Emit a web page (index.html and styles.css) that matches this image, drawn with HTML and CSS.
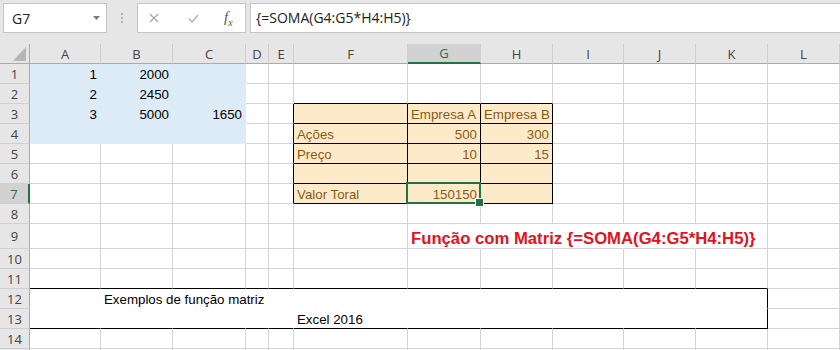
FILE: index.html
```html
<!DOCTYPE html>
<html lang="pt">
<head>
    <meta charset="UTF-8">
    <title>Exemplos de função matriz</title>
    <link rel="stylesheet" href="styles.css">
</head>
<body>

<div class="formula-bar">
    <div class="name-box">
        <span>G7</span>
        <svg class="caret" width="7" height="4" viewBox="0 0 7 4"><path d="M0 0h7L3.5 4z" fill="#7a7a7a"/></svg>
    </div>
    <div class="grip"><i></i><i></i><i></i></div>
    <div class="fx-box">
        <svg class="cancel" width="10" height="10" viewBox="0 0 10 10"><path d="M1 1l8 8M9 1l-8 8" stroke="#a6a6a6" stroke-width="1.2" fill="none"/></svg>
        <svg class="enter" width="11" height="9" viewBox="0 0 11 9"><path d="M1 4.5l3 3.5L10 1" stroke="#b0b0b0" stroke-width="1.3" fill="none"/></svg>
        <span class="fx"><i>f</i><sub>x</sub></span>
    </div>
    <div class="formula">{=SOMA(G4:G5*H4:H5)}</div>
</div>

<div class="sheet">
    <div class="row head">
        <div class="corner"><svg width="13" height="14" viewBox="0 0 13 14"><path d="M13 0v14H0z" fill="#b5b5b5"/></svg></div>
        <div>A</div><div>B</div><div>C</div><div>D</div><div>E</div><div>F</div><div class="on">G</div><div>H</div><div>I</div><div>J</div><div>K</div><div>L</div>
    </div>
    <div class="row">
        <div class="rh">1</div>
        <div class="b num">1</div><div class="b num">2000</div><div class="b"></div><div></div><div></div><div></div><div></div><div></div><div></div><div></div><div></div><div></div>
    </div>
    <div class="row">
        <div class="rh">2</div>
        <div class="b num">2</div><div class="b num">2450</div><div class="b"></div><div></div><div></div><div class="tt"></div><div class="tt"></div><div class="tt"></div><div></div><div></div><div></div><div></div>
    </div>
    <div class="row">
        <div class="rh">3</div>
        <div class="b num">3</div><div class="b num">5000</div><div class="b num">1650</div><div></div><div class="tl"></div><div class="t"></div><div class="t">Empresa A</div><div class="t">Empresa B</div><div></div><div></div><div></div><div></div>
    </div>
    <div class="row">
        <div class="rh">4</div>
        <div class="b"></div><div class="b"></div><div class="b"></div><div></div><div class="tl"></div><div class="t">Ações</div><div class="t num">500</div><div class="t num">300</div><div></div><div></div><div></div><div></div>
    </div>
    <div class="row">
        <div class="rh">5</div>
        <div></div><div></div><div></div><div></div><div class="tl"></div><div class="t">Preço</div><div class="t num">10</div><div class="t num">15</div><div></div><div></div><div></div><div></div>
    </div>
    <div class="row">
        <div class="rh">6</div>
        <div></div><div></div><div></div><div></div><div class="tl"></div><div class="t"></div><div class="t"></div><div class="t"></div><div></div><div></div><div></div><div></div>
    </div>
    <div class="row">
        <div class="rh on">7</div>
        <div></div><div></div><div></div><div></div><div class="tl"></div><div class="t">Valor Toral</div><div class="t num sel">150150</div><div class="t"></div><div></div><div></div><div></div><div></div>
    </div>
    <div class="row">
        <div class="rh">8</div>
        <div></div><div></div><div></div><div></div><div></div><div></div><div></div><div></div><div></div><div></div><div></div><div></div>
    </div>
    <div class="row tall">
        <div class="rh">9</div>
        <div></div><div></div><div></div><div></div><div></div><div></div><div class="nr red">Função com Matriz {=SOMA(G4:G5*H4:H5)}</div><div class="nr"></div><div class="nr"></div><div class="nr"></div><div></div><div></div>
    </div>
    <div class="row">
        <div class="rh">10</div>
        <div></div><div></div><div></div><div></div><div></div><div></div><div></div><div></div><div></div><div></div><div></div><div></div>
    </div>
    <div class="row">
        <div class="rh">11</div>
        <div class="tt"></div><div class="tt"></div><div class="tt"></div><div class="tt"></div><div class="tt"></div><div class="tt"></div><div class="tt"></div><div class="tt"></div><div class="tt"></div><div class="tt"></div><div class="tt"></div><div></div>
    </div>
    <div class="row">
        <div class="rh">12</div>
        <div class="bx"></div><div class="bx">Exemplos de função matriz</div><div class="bx"></div><div class="bx"></div><div class="bx"></div><div class="bx"></div><div class="bx"></div><div class="bx"></div><div class="bx"></div><div class="bx"></div><div class="bx br"></div><div></div>
    </div>
    <div class="row">
        <div class="rh">13</div>
        <div class="bx bb"></div><div class="bx bb"></div><div class="bx bb"></div><div class="bx bb"></div><div class="bx bb"></div><div class="bx bb">Excel 2016</div><div class="bx bb"></div><div class="bx bb"></div><div class="bx bb"></div><div class="bx bb"></div><div class="bx bb br"></div><div></div>
    </div>
    <div class="row">
        <div class="rh">14</div>
        <div></div><div></div><div></div><div></div><div></div><div></div><div></div><div></div><div></div><div></div><div></div><div></div>
    </div>
    <div class="row">
        <div class="rh"></div>
        <div></div><div></div><div></div><div></div><div></div><div></div><div></div><div></div><div></div><div></div><div></div><div></div>
    </div>
</div>

</body>
</html>
```

FILE: styles.css
```css
* {
    margin: 0;
    padding: 0;
    box-sizing: border-box;
}

body {
    width: 840px;
    height: 350px;
    overflow: hidden;
    background: #fff;
    font-family: 'Liberation Sans', sans-serif;
}

/* formula bar */

.formula-bar {
    display: flex;
    align-items: flex-start;
    height: 44px;
    padding: 3px 0 0 3px;
    background: #e6e6e6;
}

.name-box,
.fx-box,
.formula {
    height: 30px;
    background: #fff;
    border: 1px solid #c6c6c6;
}

.name-box {
    width: 104px;
    display: flex;
    align-items: center;
    justify-content: space-between;
    padding: 0 6px 0 8px;
    font: 14px 'Open Sans', sans-serif;
    color: #222;
}

.grip {
    width: 30px;
    display: flex;
    flex-direction: column;
    align-items: center;
    gap: 2px;
    padding-top: 10px;
}

.grip i {
    width: 2px;
    height: 2px;
    background: #b3b3b3;
}

.fx-box {
    width: 109px;
    display: flex;
    align-items: center;
}

.cancel {
    margin-left: 11px;
}

.enter {
    margin-left: 29px;
}

.fx {
    margin-left: 25px;
    font: italic 15px 'Liberation Serif', serif;
    color: #555;
}

.fx sub {
    font-size: 10px;
}

.formula {
    flex: 1;
    margin-left: 4px;
    border-right: none;
    padding-left: 5px;
    font: 14px/28px 'Open Sans', sans-serif;
    color: #222;
}

/* sheet */

.sheet {
    display: grid;
    grid-template-columns: 30px 71px 72px 73px 23px 25px 114px 73px 72px 71px 72px 72px 72px;
}

.row {
    display: contents;
}

.row > div {
    height: 20px;
    display: flex;
    align-items: flex-end;
    padding: 0 3px;
    border-right: 1px solid #d4d4d4;
    border-bottom: 1px solid #d4d4d4;
    font-size: 13.3px;
    line-height: 16px;
    white-space: nowrap;
    color: #000;
}

.row.tall > div {
    height: 25px;
}

.head > div {
    align-items: center;
    justify-content: center;
    background: #e6e6e6;
    border-right-color: #cfcfcf;
    border-bottom-color: #ababab;
    font: 13px 'Open Sans', sans-serif;
    color: #444;
}

.head > .corner {
    align-items: flex-end;
    justify-content: flex-end;
    padding: 0 3px 2px 0;
    border-right-color: #ababab;
}

.head > .on {
    background: #d2d2d2;
    border-bottom: 2px solid #217346;
    color: #217346;
}

.row > .rh {
    align-items: center;
    justify-content: center;
    background: #e6e6e6;
    border-right-color: #ababab;
    border-bottom-color: #d0d0d0;
    font: 13px 'Open Sans', sans-serif;
    color: #444;
}

.row > .rh.on {
    background: #d2d2d2;
    border-right: 2px solid #217346;
    color: #217346;
}

.row > .num {
    justify-content: flex-end;
}

.row > .b {
    background: #ddebf7;
    border-color: #ddebf7;
}

.row > .tt {
    border-bottom-color: #000;
}

.row > .tl {
    border-right-color: #000;
}

.row > .t {
    background: #fdeac8;
    border-color: #000;
    color: #8a5a1a;
}

.row > .nr {
    border-right-color: transparent;
}

.row > .red {
    font-size: 16.7px;
    font-weight: bold;
    line-height: 18px;
    color: #e3121c;
}

.row > .bx {
    border-right-color: transparent;
    border-bottom-color: transparent;
}

.row > .bb {
    border-bottom-color: #000;
}

.row > .br {
    border-right-color: #000;
}

/* selected cell */

.row > .sel {
    position: relative;
    z-index: 1;
}

.sel::after {
    content: "";
    position: absolute;
    top: -2px;
    left: -2px;
    right: -1px;
    bottom: -1px;
    border: 2px solid #217346;
}

.sel::before {
    content: "";
    position: absolute;
    right: -4px;
    bottom: -4px;
    width: 7px;
    height: 7px;
    background: #217346;
    border: 1px solid #fff;
    z-index: 2;
}
```
